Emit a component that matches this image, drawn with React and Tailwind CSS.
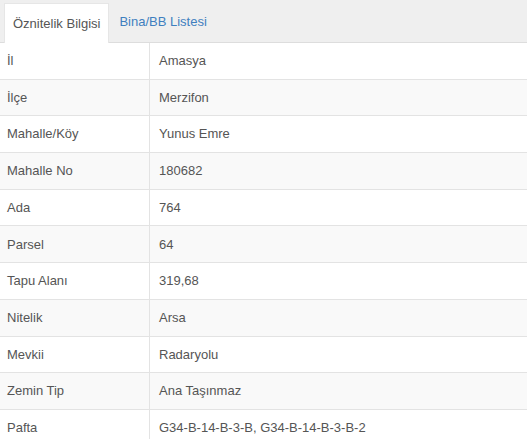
import React from 'react';

const rows = [
  ['İl', 'Amasya'],
  ['İlçe', 'Merzifon'],
  ['Mahalle/Köy', 'Yunus Emre'],
  ['Mahalle No', '180682'],
  ['Ada', '764'],
  ['Parsel', '64'],
  ['Tapu Alanı', '319,68'],
  ['Nitelik', 'Arsa'],
  ['Mevkii', 'Radaryolu'],
  ['Zemin Tip', 'Ana Taşınmaz'],
  ['Pafta', 'G34-B-14-B-3-B, G34-B-14-B-3-B-2'],
];

export default function App() {
  return (
    <div
      className="w-[527px] h-[439px] overflow-hidden bg-white text-[13px] text-[#555555]"
      style={{ fontFamily: '"Liberation Sans", Arial, sans-serif' }}
    >
      {/* Tabs */}
      <div className="h-[43px] bg-[#efefef] border-b border-[#dddddd] flex items-end pl-[4px]">
        <div className="h-[40px] -mb-px bg-white border-x border-t border-[#e6e6e6] px-[8px] flex items-center">
          Öznitelik Bilgisi
        </div>
        <div className="h-[40px] px-[10px] flex items-center text-[#3f7fbf]">
          Bina/BB Listesi
        </div>
      </div>

      {/* Attribute table */}
      <div className="flex flex-col">
        {rows.map(([label, value], i) => (
          <div
            key={label}
            className={`flex h-[36.7px] border-b border-[#e3e3e3] ${i % 2 === 1 ? 'bg-[#f9f9f9]' : 'bg-white'}`}
          >
            <div className="w-[150px] shrink-0 border-r border-[#e3e3e3] pl-[7px] flex items-center">
              {label}
            </div>
            <div className="flex-1 pl-[9px] flex items-center">{value}</div>
          </div>
        ))}
      </div>
    </div>
  );
}
